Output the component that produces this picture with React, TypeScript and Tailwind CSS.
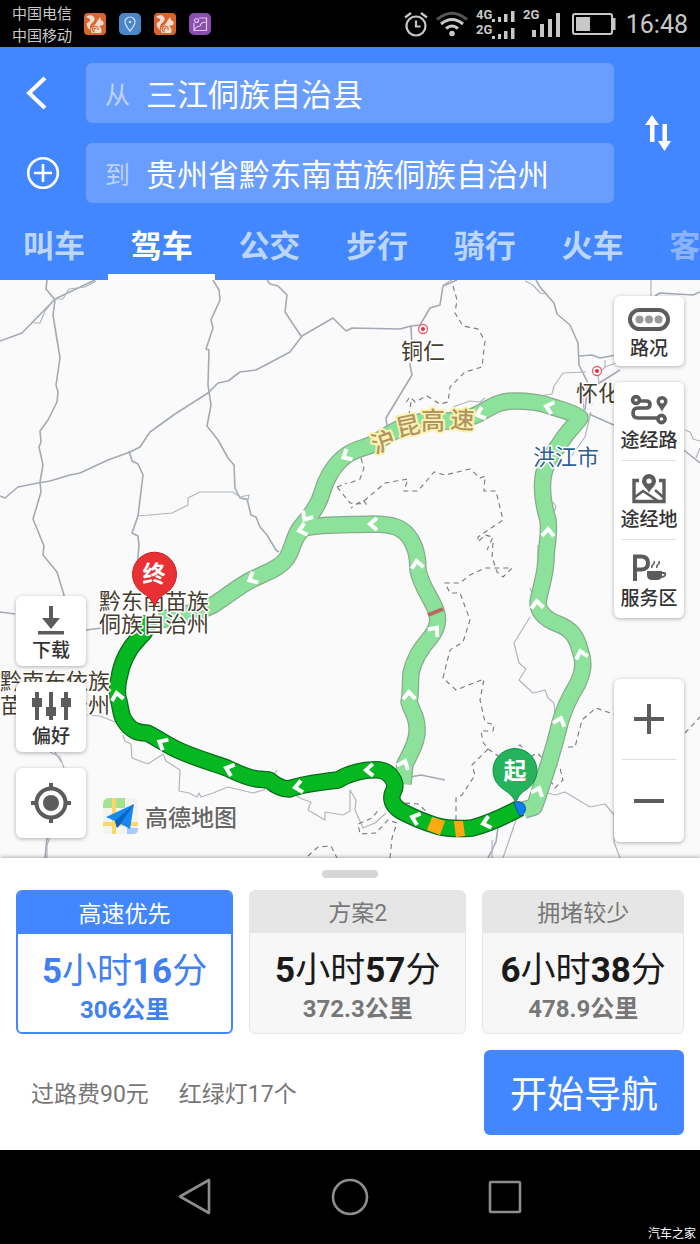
import { useState, type ReactNode } from "react"

const roads = [
    "M47 280 L46 289 L55 300 L53 315 L60 358 L56 385 L58 392 L57 402 L48 420 L40 431 L41 442 L39 447 L43 465 L40 482 L41 492 L33 519 L44 546 L43 555 L57 572 L64 595 L50 666",
    "M0 341 L22 333 L55 299 L95 280",
    "M0 496 L5 498 L18 487 L38 483 L50 481 L70 475 L80 473 L108 460 L130 452 L140 447 L150 432 L175 414 L208 393 L218 383 L228 381 L240 372 L256 370 L290 352 L302 336 L333 318 L339 324 L346 331 L352 328 L400 329 L411 326 L420 325 L430 308 L440 305 L443 286 L457 280",
    "M213 280 L219 290 L220 300 L211 320 L213 328 L206 349 L209 350 L208 385 L211 405 L207 426 L218 440 L228 458 L234 465 L235 488 L240 498 L247 499 L251 515 L256 517 L260 527 L267 535 L276 550 L279 552",
    "M267 280 L270 284 L278 286 L287 295 L285 312 L301 336",
    "M129 451 L132 461 L138 464 L143 475 L138 516 L132 533 L138 536 L139 545 L137 570",
    "M411 326 L412 350 L410 365 L412 375 L386 418 L387 426",
    "M536 280 L540 287 L554 303 L557 314 L570 325 L578 343 L579 365 L588 383 L585 410",
    "M579 356 L592 355 L600 358 L616 355",
    "M596 385 L620 370",
    "M589 414 L616 426 L685 451 L700 463",
    "M655 296 L660 293 L693 295 L700 292",
    "M0 612 L15 614",
    "M86 630 L110 627",
    "M498 827 L496 842 L488 858",
    "M410 777 L421 775 L445 780",
    "M47 837 L45 858",
]

const thinRoads = [
    "M33 323 L40 323 L45 311 L55 299 L63 299 L69 289 L85 287 L96 281",
    "M443 285 L452 280",
    "M138 516 L172 513 L188 505 L188 498 L200 492 L233 492 L240 497 L249 495 L248 500 L242 499",
    "M525 281 L533 285 L540 293 L546 294",
    "M651 280 L651 296",
    "M540 396 L552 394 L554 386 L563 373 L586 372",
    "M598 374 L599 384 M605 360 L605 367 L600 372 M605 367 L616 363",
    "M453 407 L470 401 L480 402 L485 398",
    "M584 410 L583 400 L588 385 M591 412 L585 437 L570 458 M592 405 L589 395",
    "M685 430 L690 432 L693 439 L700 441 M700 448 L696 458",
    "M538 545 L538 563 M530 588 L532 593 M553 502 L556 506 L554 512",
    "M530 617 L514 643 L519 663 L526 669 L519 680 L533 693 L545 690 L548 698 L554 703 L555 712",
    "M548 793 L555 795 L565 792 L590 807 L605 804 L614 815 L614 842 L620 858",
    "M516 820 L503 858",
    "M492 840 L492 858",
    "M86 715 L100 716 L115 722",
    "M123 735 L125 741 L131 744 L132 758 L148 764 L163 754 L166 761 L180 770 L179 791 L189 793 L197 797 L199 793 L201 797 L213 793 L228 787 L253 793 L264 790 L270 780 L277 770",
    "M295 795 L302 799 L311 802 L308 810 L325 820 L325 812 L343 815 L350 811 L350 790 L356 800 L355 810 L363 828 L375 823 L386 813",
    "M50 752 L60 757 L64 768 M55 752 L61 762",
    "M50 837 L47 845 L47 858",
]

const borders = [
    "M453 286 L457 300 L455 313 L463 326 L478 329 L485 341 L482 367 L465 372 L450 387 L448 402 L440 404 L427 396 L415 402 L410 397 L404 405 M411 402 L409 415",
    "M337 487 L347 483 M337 487 L350 503 L366 504 L363 500 L351 508 M361 458 L364 468 L360 479 L350 483",
    "M364 501 L385 483 L408 479 L404 491 L418 491 L434 472 L445 475 L470 469 L480 478 L485 476 L484 491 L496 491 L503 520 L478 537 L478 542 L485 535 L493 537 L487 550",
    "M493 543 L492 557 L497 572 L503 577 L512 568 L485 568 L470 575 L460 583 L445 583 L450 593 L460 593 L470 620 L463 642 L450 650 L443 678 L456 690 L484 679 L480 700 L485 722 L494 725 L493 731 L481 731 L483 742 L488 749 L472 765 L475 775 L462 795 L456 798 L456 822",
    "M488 749 L500 757 L520 745 L530 757 L537 753 L545 760 L560 768 L563 780 L555 788 L550 780",
    "M568 747 L575 747 L582 720 L596 708 L616 715 M685 733 L700 717",
    "M308 856 L318 847 L331 846 L337 858",
    "M390 858 L392 838 L397 823 L388 820 L376 833 L360 834 L358 824 L372 818 L380 808 M405 803 L418 804 L426 811",
]

const ROUTE_NORTH = "M160 620 C180 615 200 612 213 605 C226 597 240 585 253 579 C270 571 281 567 287 558 C293 548 293 538 300 528 C309 517 318 507 322 493 C326 478 335 463 347 455 C358 447 369 448 378 441 C390 433 405 424 420 422 C440 420 460 424 480 413 C490 408 498 401 513 401 C526 401 540 402 550 406 C561 410 571 411 580 418 C574 426 566 433 559 445 C552 455 545 463 543 478 C541 494 544 507 548 520 C550 533 546 548 546 560 C545 578 540 590 538 602 C538 612 545 619 558 624 C572 629 577 638 580 650 C585 663 583 673 577 685 C569 698 563 712 560 723 C555 744 549 764 542 784 C539 793 537 801 534 807 L524 810"
const ROUTE_MIDDLE = "M288 556 C294 545 295 533 305 528 C320 524 345 525 373 524 C393 524 403 528 409 537 C416 546 418 558 418 570 C420 583 430 597 435 608 C440 619 438 628 430 638 C421 648 414 658 411 673 C410 684 411 694 409 702 C412 712 417 716 417 728 C418 740 411 752 405 764 L403 784"
const ROUTE_MAIN = "M150 616 C149 625 145 633 139 638 C127 650 121 666 119 678 C117 686 117 692 118 698 C121 706 120 714 124 720 C131 731 138 733 147 733 C156 737 168 746 180 751 C196 758 210 762 227 768 C239 774 248 778 257 779 L269 780 C276 786 283 789 289 789 C302 784 320 782 338 780 C350 773 362 769 380 770 C391 772 397 783 394 790 C389 799 393 806 401 811 C412 817 424 822 437 826 C448 829 460 829 472 828 C488 824 505 816 520 808"

const arrows = [
    { x: 252, y: 579, r: -28 },
    { x: 346, y: 456, r: -30 },
    { x: 306, y: 517, r: -58 },
    { x: 302, y: 530, r: -15 },
    { x: 480, y: 414, r: -20 },
    { x: 549, y: 407, r: 15 },
    { x: 548, y: 532, r: 92 },
    { x: 537, y: 604, r: 85 },
    { x: 581, y: 654, r: 75 },
    { x: 560, y: 721, r: 108 },
    { x: 538, y: 791, r: 112 },
    { x: 373, y: 524, r: 0 },
    { x: 417, y: 564, r: 82 },
    { x: 435, y: 630, r: 128 },
    { x: 409, y: 695, r: 88 },
    { x: 404, y: 764, r: 112 },
    { x: 117, y: 696, r: 80 },
    { x: 162, y: 743, r: 28 },
    { x: 229, y: 769, r: 18 },
    { x: 298, y: 787, r: -10 },
    { x: 369, y: 770, r: -2 },
    { x: 415, y: 818, r: 18 },
    { x: 486, y: 823, r: -15 },
]

const MapCanvas = () => (
    <svg className="absolute inset-0 size-full" viewBox="0 280 700 578" preserveAspectRatio="xMidYMid slice" role="img" aria-label="路线地图">
        <g fill="none" stroke="#a3aab4" strokeWidth="1.6" strokeLinejoin="round">
            {roads.map((d, i) => <path key={i} d={d} />)}
        </g>
        <g fill="none" stroke="#b0b6be" strokeWidth="1.2" strokeLinejoin="round">
            {thinRoads.map((d, i) => <path key={i} d={d} />)}
        </g>
        <g fill="none" stroke="#77777f" strokeWidth="1.1" strokeDasharray="5 4">
            {borders.map((d, i) => <path key={i} d={d} />)}
        </g>

        {/* alternative routes */}
        <g fill="none" stroke="#87ab8d" strokeWidth="17.5" strokeLinejoin="round">
            <path d={ROUTE_NORTH} />
            <path d={ROUTE_MIDDLE} />
        </g>
        <g fill="none" stroke="#8ce29b" strokeWidth="15" strokeLinejoin="round">
            <path d={ROUTE_NORTH} />
            <path d={ROUTE_MIDDLE} />
        </g>
        <path d="M428 615 L443 609" stroke="#bd6560" strokeWidth="4" />

        {/* selected route */}
        <path d={ROUTE_MAIN} fill="none" stroke="#0b6b1b" strokeWidth="17.5" strokeLinejoin="round" />
        <path d={ROUTE_MAIN} fill="none" stroke="#05b822" strokeWidth="15" strokeLinejoin="round" />
        <path d="M432 817 L445 821 L440 835 L427 830 Z M454 821 L463 821 L465 836 L456 837 Z" fill="#ffa912" />
        <path d="M514 803 C521 799 527 805 525 811 C524 815 521 816 519 815 Z" fill="#0b7ff0" stroke="#0a4f96" />

        <g fill="none" stroke="#fff" strokeWidth="4">
            {arrows.map(({ x, y, r }, i) => (
                <path key={i} d="M4 -6 L-3 0 L4 6" transform={`translate(${x} ${y}) rotate(${r})`} />
            ))}
        </g>

        {[[423, 329], [597, 371]].map(([x, y]) => (
            <g key={x}>
                <circle cx={x} cy={y} r="4.5" fill="#fff" stroke="#e4606a" strokeWidth="1.3" />
                <circle cx={x} cy={y} r="2" fill="#e0303c" />
            </g>
        ))}

        <g fontSize="22" fill="#453d30" stroke="#fff" strokeWidth="3" paintOrder="stroke" strokeLinejoin="round">
            <text x="401" y="359">铜仁</text>
            <text x="576" y="401">怀化</text>
            <text x="533" y="465" fill="#2d6195">洪江市</text>
            <text x="99" y="609">黔东南苗族</text>
            <text x="99" y="632">侗族自治州</text>
            <text x="0" y="689">黔南布依族</text>
            <text x="0" y="713">苗族自治州</text>
        </g>
        <text
            x="375 398 421 450" y="454 437 429 428" rotate="-20 -12 0 3"
            fontSize="24" fontWeight="500" fill="#b29363" stroke="#fbf3ae" strokeWidth="4" paintOrder="stroke" strokeLinejoin="round"
        >沪昆高速</text>

        {/* destination and start pins */}
        <path d="M155 606 C151 599 149 597 143 593 A22 22 0 1 1 166 593 C160 597 158 599 155 606 Z" fill="#e93034" stroke="#c92226" />
        <text x="154" y="582" textAnchor="middle" fontSize="23" fontWeight="700" fill="#fff">终</text>
        <path d="M516 803 C513 796 510 794 503 789 A22 22 0 1 1 527 789 C520 794 518 796 516 803 Z" fill="#24b25c" stroke="#169049" />
        <text x="515" y="779" textAnchor="middle" fontSize="23" fontWeight="700" fill="#fff">起</text>

        {/* map provider logo */}
        <g>
            <rect x="103" y="798" width="35" height="36" rx="5" fill="#f4f4ee" />
            <path d="M109 798 H125 V808 H103 V805 Q103 798 109 798" fill="#a6e391" />
            <path d="M112 798 H116 V834 H112 Z M103 822 H138 V826 H103 Z" fill="#fbd768" />
            <path d="M127 828 H138 Q138 834 133 834 H127 Z" fill="#a9c8fb" />
            <path d="M134 804 L106 817 L115 821 L117 828 L121 824 L130 829 Z" fill="#1688f0" />
            <path d="M134 804 L115 821 L117 828 L121 823 Z" fill="#0c62c2" />
        </g>
        <text x="145" y="826" fontSize="23" fontWeight="500" fill="#666" stroke="#fff" strokeWidth="2" paintOrder="stroke">高德地图</text>
    </svg>
)

const TrafficIcon = () => (
    <svg width="44" height="26" viewBox="0 0 44 26">
        <rect x="3" y="3" width="38" height="19" rx="9.5" fill="none" stroke="#5c5c5c" strokeWidth="4" />
        <g fill="#999"><circle cx="12.5" cy="12.5" r="4" /><circle cx="22" cy="12.5" r="4" /><circle cx="31.5" cy="12.5" r="4" /></g>
    </svg>
)

const ViaRoadIcon = () => (
    <svg width="38" height="30" viewBox="0 0 38 30" fill="none" stroke="#5c5c5c" strokeWidth="3.6">
        <circle cx="6" cy="5" r="3.4" />
        <path d="M9 6 H16 Q20 6 20 9.5 Q20 13 16 13 H8 Q3 13 3 18 Q3 23 8 23 H27" />
        <circle cx="31.5" cy="24" r="3.6" />
        <path d="M32 1 a5.5 5.5 0 0 1 5.5 5.5 C37.5 10 33 13 32 17 C31 13 26.5 10 26.5 6.5 A5.5 5.5 0 0 1 32 1 Z" fill="#5c5c5c" stroke="none" />
        <circle cx="32" cy="6.5" r="2" fill="#fff" stroke="none" />
    </svg>
)

const ViaPlaceIcon = () => (
    <svg width="38" height="30" viewBox="0 0 38 30" fill="none" stroke="#5c5c5c" strokeWidth="3.4">
        <path d="M9 6.5 H4 V27.5 H34 V6.5 H29" />
        <path d="M5 23 L13 17 L28 27 M25 16 L33 23" strokeWidth="2.6" />
        <path d="M19 0 a7 7 0 0 1 7 7 C26 12 20 15 19 19 C18 15 12 12 12 7 A7 7 0 0 1 19 0 Z" fill="#5c5c5c" stroke="none" />
        <circle cx="19" cy="7" r="2.6" fill="#fff" stroke="none" />
    </svg>
)

const ServiceIcon = () => (
    <svg width="38" height="30" viewBox="0 0 38 30" fill="none" stroke="#5c5c5c">
        <path d="M5 28 V3.5 H11 Q18 3.5 18 10 Q18 16.5 11 16.5 H5" strokeWidth="4" />
        <path d="M17 18 H32 V22 Q32 27 27 27 H22 Q17 27 17 22 Z" fill="#5c5c5c" stroke="none" />
        <path d="M31 20 H34 Q36 20 35 22.5 Q34 24 31 24" strokeWidth="1.8" />
        <path d="M22 15 Q21 13 23 11.5 T24 8 M27 15 Q26 13 28 11.5 T29 8" strokeWidth="1.4" />
    </svg>
)

const DownloadIcon = () => (
    <svg width="28" height="30" viewBox="0 0 28 30" fill="#5c5c5c">
        <path d="M12 1 H16 V13 H23 L14 24 L5 13 H12 Z M1 26 H27 V29.5 H1 Z" />
    </svg>
)

const PreferenceIcon = () => (
    <svg width="40" height="30" viewBox="0 0 40 30" fill="#5c5c5c">
        <path d="M4 1 H8 V29 H4 Z M18 1 H22 V29 H18 Z M33 1 H37 V29 H33 Z" />
        <path d="M1 7 H11 V16 H1 Z M15 16 H25 V25 H15 Z M30 7 H40 V16 H30 Z" />
    </svg>
)

const LocateIcon = () => (
    <svg width="42" height="42" viewBox="0 0 42 42" fill="none" stroke="#5c5c5c" strokeWidth="4">
        <circle cx="21" cy="21" r="14.5" />
        <circle cx="21" cy="21" r="8" fill="#5c5c5c" stroke="none" />
        <path d="M21 1 V7 M21 35 V41 M1 21 H7 M35 21 H41" />
    </svg>
)

const SquirrelIcon = () => (
    <svg width="22" height="22" viewBox="0 0 22 22">
        <rect width="22" height="22" rx="4" fill="#d9652f" />
        <path d="M2 4 Q7 0 10 4 Q12 7 8 10 Q5 13 6 17 Q2 14 3 10 Q7 8 6 6 Q4 5 2 4 Z M14 7 L16 4 L17 7 Q21 9 19 12 L15 13 Q19 16 17 20 H8 Q5 16 9 13 Q12 11 14 7 Z" fill="#f0ddd2" />
        <path d="M14 17 A3 3 0 1 0 11 19 M12 16 A1 1 0 1 0 11 17" fill="none" stroke="#d9652f" strokeWidth="1.2" />
    </svg>
)

const PinAppIcon = () => (
    <svg width="22" height="22" viewBox="0 0 22 22" fill="none" stroke="#d5e3f2" strokeWidth="1.2">
        <rect width="22" height="22" rx="5" fill="#4a86c8" stroke="none" />
        <path d="M11 18 Q6 12 6 9 A5 5 0 0 1 16 9 Q16 12 11 18 Z" />
        <circle cx="11" cy="9" r="1.3" fill="#d5e3f2" stroke="none" />
    </svg>
)

const GalleryAppIcon = () => (
    <svg width="22" height="22" viewBox="0 0 22 22" fill="none" stroke="#e0c9ec" strokeWidth="1.2">
        <rect width="22" height="22" rx="5" fill="#8a4db0" stroke="none" />
        <path d="M10 5 H17.5 V17.5 H5 V10 M5 17 Q8 13 11 13 Q12 9 17 9" />
        <circle cx="7.5" cy="7.5" r="2" />
    </svg>
)

const StatusBar = () => (
    <div className="flex h-[47px] items-center justify-between bg-black px-3 text-[#c8c8c8]">
        <div className="flex items-center gap-3">
            <div className="pt-0.5 text-[15px] leading-[22px]">
                <p>中国电信</p>
                <p>中国移动</p>
            </div>
            <div className="flex items-center gap-[13px]">
                <SquirrelIcon />
                <PinAppIcon />
                <SquirrelIcon />
                <GalleryAppIcon />
            </div>
        </div>
        <div className="flex items-center gap-2">
            <svg width="24" height="26" viewBox="0 0 24 26" fill="none" stroke="currentColor" strokeWidth="2.2">
                <circle cx="12" cy="15" r="9.5" />
                <path d="M12 9.5 V15.5 H16.5 M1 6.5 L7 2 M23 6.5 L17 2" />
            </svg>
            <svg width="32" height="26" viewBox="0 0 32 26" fill="none" stroke="currentColor" strokeWidth="3">
                <path d="M1 8.5 Q16 -4 31 8.5" stroke="#555" />
                <path d="M5 13 Q16 4 27 13 M10 17.5 Q16 12.5 22 17.5" />
                <circle cx="16" cy="22.5" r="2.8" fill="currentColor" stroke="none" />
            </svg>
            <svg width="39" height="34" viewBox="0 0 39 34" fill="currentColor">
                <text x="0" y="12" fontSize="13" fontWeight="700">4G</text>
                <text x="0" y="27" fontSize="13" fontWeight="700">2G</text>
                <path d="M16 12 h3 v3 h-3 Z M22 10 h3 v5 h-3 Z M28 7 h3.5 v8 h-3.5 Z M35 4 h3.5 v11 h-3.5 Z" />
                <path d="M16 29 h3 v3 h-3 Z M22 27 h3 v5 h-3 Z M28 24 h3.5 v8 h-3.5 Z M35 21 h3.5 v11 h-3.5 Z" />
            </svg>
            <svg width="41" height="34" viewBox="0 0 41 34" fill="currentColor">
                <text x="0" y="12" fontSize="13" fontWeight="700">2G</text>
                <path d="M9 23 h4 v7 h-4 Z M17 17 h4 v13 h-4 Z M25 12 h4 v18 h-4 Z M33 6 h4 v24 h-4 Z" />
            </svg>
            <svg width="46" height="22" viewBox="0 0 46 22">
                <rect x="1" y="1" width="39" height="20" rx="2" fill="none" stroke="currentColor" strokeWidth="2" />
                <path d="M4 4 h14 v14 h-14 Z M40 5 h3.5 v12 h-3.5 Z" fill="currentColor" />
            </svg>
            <span className="pt-0.5 text-[25px] leading-8">16:48</span>
        </div>
    </div>
)

type PlaceFieldType = {
    id: string;
    label: string;
    value: string;
    onChange: (value: string) => void;
}

const PlaceField = ({ id, label, value, onChange }: PlaceFieldType) => (
    <div className="flex h-[60px] items-center gap-4 rounded-md bg-[#699dff] pl-[19px] pr-4 pt-1.5">
        <label htmlFor={id} className="text-[25px] text-[#bdd4ff]">{label}</label>
        <input
            id={id}
            value={value}
            onChange={(e) => onChange(e.target.value)}
            className="min-w-0 flex-1 bg-transparent text-[31px] leading-10 text-white outline-none"
        />
    </div>
)

const tabs = ["叫车", "驾车", "公交", "步行", "骑行", "火车", "客"]

const Header = () => {
    const [from, setFrom] = useState("三江侗族自治县");
    const [to, setTo] = useState("贵州省黔东南苗族侗族自治州");
    const [activeTab, setActiveTab] = useState("驾车");

    const handleSwap = () => {
        setFrom(to);
        setTo(from);
    }

    return (
        <header className="bg-[#4287ff] pt-4 text-white">
            <div className="grid grid-cols-[86px_1fr_86px]">
                <div className="flex flex-col items-start gap-5 pl-[22px]">
                    <button aria-label="返回" className="flex h-[60px] items-center">
                        <svg width="30" height="36" viewBox="0 0 30 36" fill="none" stroke="#fff" strokeWidth="4">
                            <path d="M23 3 L7 18 L23 33" />
                        </svg>
                    </button>
                    <button aria-label="添加途经点" className="flex h-[60px] items-center pl-1">
                        <svg width="34" height="34" viewBox="0 0 34 34" fill="none" stroke="#fff" strokeWidth="2.6">
                            <circle cx="17" cy="17" r="14.8" />
                            <path d="M17 8 V26 M8 17 H26" />
                        </svg>
                    </button>
                </div>
                <div className="flex flex-col gap-5">
                    <PlaceField id="from" label="从" value={from} onChange={setFrom} />
                    <PlaceField id="to" label="到" value={to} onChange={setTo} />
                </div>
                <button aria-label="交换起终点" onClick={handleSwap} className="flex items-center justify-center">
                    <svg width="28" height="38" viewBox="0 0 28 38" fill="#fff">
                        <path d="M9 1 L16 11 H11.5 V28 H7 V11 H2 Z M21.5 37 L28 27 H24 V10 H19.5 V27 H15 Z" />
                    </svg>
                </button>
            </div>
            <nav className="mt-3 flex overflow-hidden">
                {
                    tabs.map((tab) => (
                        <button
                            key={tab}
                            onClick={() => setActiveTab(tab)}
                            className={`h-[65px] w-2/13 shrink-0 border-b-6 pl-[23px] pt-1.5 text-left text-[31px] font-bold ${tab === activeTab
                                ? "border-white text-white"
                                : tab === "客"
                                    ? "border-transparent text-[#8ab4ff]"
                                    : "border-transparent text-[#bdd6ff]"
                                }`}
                        >
                            {tab}
                        </button>
                    ))
                }
            </nav>
        </header>
    )
}

const MapButton = ({ icon, label }: { icon: ReactNode, label: string }) => (
    <button className="flex h-[70px] w-full flex-col items-center justify-center gap-1 pt-1.5">
        {icon}
        <span className="text-[19px] font-medium leading-6 text-[#333]">{label}</span>
    </button>
)

const PANEL = "w-[70px] rounded-md bg-white shadow-[0_1px_4px_rgba(0,0,0,0.3)]"

const plans = [
    { name: "高速优先", time: ["5", "小时", "16", "分"], distance: "306公里" },
    { name: "方案2", time: ["5", "小时", "57", "分"], distance: "372.3公里" },
    { name: "拥堵较少", time: ["6", "小时", "38", "分"], distance: "478.9公里" },
]

const RouteSheet = () => {
    const [selected, setSelected] = useState(0);

    return (
        <section className="relative bg-white px-4 pb-[15px] pt-3 shadow-[0_-1px_4px_rgba(0,0,0,0.3)]">
            <div className="mx-auto h-2 w-14 rounded-full bg-[#d6d6d6]" />
            <div className="mt-3 grid grid-cols-[14fr_14fr_13fr] gap-4">
                {
                    plans.map(({ name, time, distance }, index) => {
                        const active = index === selected
                        return (
                            <button
                                key={name}
                                onClick={() => setSelected(index)}
                                className={`flex h-36 flex-col overflow-hidden rounded-md ${active
                                    ? "border-2 border-[#4287ff] bg-white"
                                    : "border border-[#e6e6e6] bg-[#f7f7f7]"
                                    }`}
                            >
                                <span
                                    className={`w-full pt-1 text-[23px] leading-[38px] ${active
                                        ? "bg-[#4287ff] text-white"
                                        : "bg-[#e6e6e6] text-[#777]"
                                        }`}
                                >
                                    {name}
                                </span>
                                <span className={`mt-3.5 w-full text-[35px] leading-[48px] ${active ? "text-[#4080f0]" : "text-[#1a1a1a]"}`}>
                                    <b>{time[0]}</b>{time[1]}<b>{time[2]}</b>{time[3]}
                                </span>
                                <span className={`w-full text-[24px] font-bold leading-7 ${active ? "text-[#4080f0]" : "text-[#777]"}`}>
                                    {distance}
                                </span>
                            </button>
                        )
                    })
                }
            </div>
            <div className="mt-4 flex items-center justify-between">
                <div className="flex gap-[30px] pl-[15px] pt-1.5 text-[23px] text-[#777]">
                    <p>过路费90元</p>
                    <p>红绿灯17个</p>
                </div>
                <button className="h-[85px] w-[200px] rounded-md bg-[#4287ff] pt-1.5 text-[37px] text-white">开始导航</button>
            </div>
        </section>
    )
}

const App = () => {
    return (
        <div className="flex min-h-screen flex-col overflow-hidden bg-black font-['Roboto','Noto_Sans_CJK_SC',sans-serif]" lang="zh-CN">
            <StatusBar />
            <Header />
            <main className="relative min-h-[560px] flex-1 overflow-hidden bg-[#fafafa]">
                <MapCanvas />
                <div className="absolute bottom-5 left-4 flex flex-col gap-4">
                    <div className={PANEL}><MapButton icon={<DownloadIcon />} label="下载" /></div>
                    <div className={PANEL}><MapButton icon={<PreferenceIcon />} label="偏好" /></div>
                    <div className={PANEL}>
                        <button aria-label="定位" className="flex h-[70px] w-full items-center justify-center"><LocateIcon /></button>
                    </div>
                </div>
                <div className="absolute inset-y-4 right-4 flex flex-col justify-between">
                    <div className="flex flex-col gap-4">
                        <div className={PANEL}><MapButton icon={<TrafficIcon />} label="路况" /></div>
                        <div className={`${PANEL} flex flex-col py-1`}>
                            <MapButton icon={<ViaRoadIcon />} label="途经路" />
                            <hr className="mx-2 my-1 border-[#ddd]" />
                            <MapButton icon={<ViaPlaceIcon />} label="途经地" />
                            <hr className="mx-2 my-1 border-[#ddd]" />
                            <MapButton icon={<ServiceIcon />} label="服务区" />
                        </div>
                    </div>
                    <div className={PANEL}>
                        <button aria-label="放大" className="flex h-20 w-full items-center justify-center">
                            <svg width="30" height="30" viewBox="0 0 30 30" stroke="#5c5c5c" strokeWidth="4"><path d="M15 0 V30 M0 15 H30" /></svg>
                        </button>
                        <hr className="mx-2 border-[#ddd]" />
                        <button aria-label="缩小" className="flex h-[82px] w-full items-center justify-center">
                            <svg width="30" height="30" viewBox="0 0 30 30" stroke="#5c5c5c" strokeWidth="4"><path d="M0 15 H30" /></svg>
                        </button>
                    </div>
                </div>
            </main>
            <RouteSheet />
            <footer className="relative flex h-[94px] items-center justify-center gap-[117px] bg-black">
                <button aria-label="返回键">
                    <svg width="38" height="38" viewBox="0 0 38 38" fill="none" stroke="#8c8c8c" strokeWidth="2.6" strokeLinejoin="round">
                        <path d="M33 2 V35 L4 18.5 Z" />
                    </svg>
                </button>
                <button aria-label="主屏幕">
                    <svg width="38" height="38" viewBox="0 0 38 38" fill="none" stroke="#8c8c8c" strokeWidth="2.6">
                        <circle cx="19" cy="19" r="17" />
                    </svg>
                </button>
                <button aria-label="最近任务">
                    <svg width="38" height="38" viewBox="0 0 38 38" fill="none" stroke="#8c8c8c" strokeWidth="2.6">
                        <rect x="4" y="4" width="30" height="30" rx="1" />
                    </svg>
                </button>
                <span className="absolute bottom-0.5 right-1 text-[12px] leading-4 text-white">汽车之家</span>
            </footer>
        </div>
    )
}

export default App
